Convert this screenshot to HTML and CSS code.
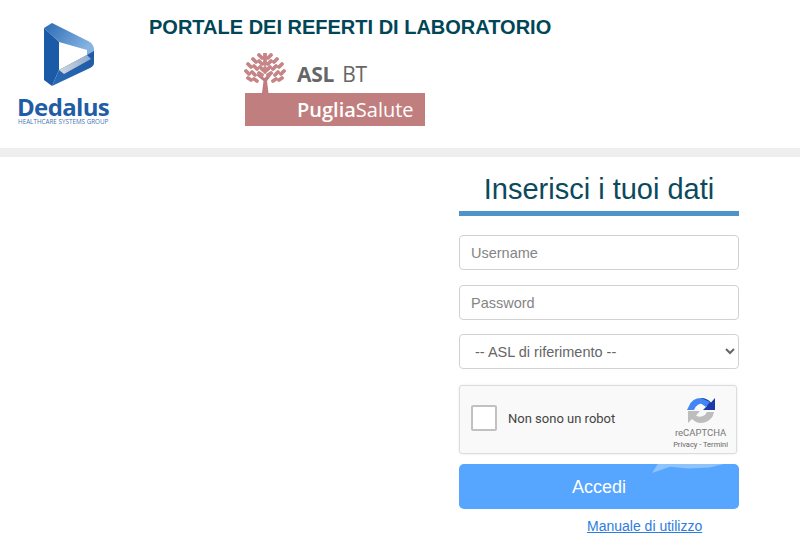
FILE: index.html
```html
<!DOCTYPE html>
<html lang="it">
<head>
<meta charset="utf-8">
<title>Portale dei referti di laboratorio</title>
<link rel="stylesheet" href="styles.css">
</head>
<body>
<header class="header">
  <div class="brand">
    <svg class="brand-mark" viewBox="0 0 52 64" width="52" height="64" aria-hidden="true">
      <defs>
        <linearGradient id="top" x1="0" y1="0" x2="1" y2="0.5">
          <stop offset="0" stop-color="#2a6ab4"/><stop offset="1" stop-color="#86b3e2"/>
        </linearGradient>
        <linearGradient id="low" x1="0" y1="1" x2="1" y2="0">
          <stop offset="0" stop-color="#2a6ab4"/><stop offset="1" stop-color="#1d5aa6"/>
        </linearGradient>
        <linearGradient id="inner" x1="0" y1="0" x2="1" y2="0">
          <stop offset="0" stop-color="#d3d8e0"/><stop offset="1" stop-color="#8fa9cc"/>
        </linearGradient>
      </defs>
      <path d="M0 5 L8 0 L46 19 Q50 22 50 27 L50 32 L43 32 L43 27 L15 19 Z" fill="url(#top)"/>
      <path d="M0 5 L15 19 L15 47 L8 63 L0 57 Z" fill="#1b5aa6"/>
      <path d="M15 47 L43 32 L50 28 L50 40 Q50 43 46 45 L8 63 Z" fill="url(#low)"/>
      <path d="M15 47 L43 32 L47 36 L20 51 Z" fill="url(#inner)"/>
    </svg>
    <div class="brand-name">Dedalus</div>
    <div class="brand-sub">HEALTHCARE SYSTEMS GROUP</div>
  </div>
  <div class="heading">
    <h1 class="portal-title">PORTALE DEI REFERTI DI LABORATORIO</h1>
    <div class="asl">
      <div class="asl-top">
        <svg class="tree" viewBox="0 0 42 40" width="42" height="40" aria-hidden="true">
          <path d="M18 40 L19.500 28 L12 22 L14 21 L20.500 25 L27 19 L29 20 L23 28 L24.500 40 Z" fill="#c07c7e"/>
          <g stroke="#c58587" stroke-width="3.800" stroke-linecap="round">
            <path d="M15 2l3 3M21 1l0 4M27 2l-3 3M9 6l3 3M15 8l3 3M21 7l0 4M27 8l-3 3M33 6l-3 3"/>
            <path d="M4 11l3 3M10 13l3 3M16 14l3 3M26 14l-3 3M32 13l-3 3M38 11l-3 3"/>
            <path d="M2 18l3 3M8 19l3 3M15 20l3 2M27 20l-3 2M34 19l-3 3M40 18l-3 3"/>
            <path d="M4 25l3 2M10 26l3 2M32 26l-3 2M38 25l-3 2M21 15l0 4"/>
          </g>
        </svg>
        <span class="asl-name"><b>ASL</b> BT</span>
      </div>
      <div class="asl-banner"><b>Puglia</b>Salute</div>
    </div>
  </div>
</header>
<div class="divider"></div>
<main class="main">
  <form class="login">
    <h2 class="login-title">Inserisci i tuoi dati</h2>
    <input class="field" type="text" placeholder="Username">
    <input class="field" type="password" placeholder="Password">
    <select class="field field-select">
      <option>-- ASL di riferimento --</option>
    </select>
    <div class="captcha">
      <span class="captcha-check"></span>
      <span class="captcha-label">Non sono un robot</span>
      <div class="captcha-brand">
        <svg class="captcha-icon" viewBox="0 0 28 28" width="28" height="28" aria-hidden="true">
          <path d="M14 1 A13 13 0 0 1 24 5.500 L28 1 L28 13 L16 13 L20 9 A8 8 0 0 0 14 6.500 Z" fill="#1c3aa9"/>
          <path d="M14 1 A13 13 0 0 0 2 9 L0 13 L7 13 L8.500 10 A8 8 0 0 1 14 6.500 L19 10 L23 5 Z" fill="#4285f4"/>
          <path d="M1 14 L1 26 L5 22 A13 13 0 0 0 27 15 L20 15 A7.500 7.500 0 0 1 9 18.500 L13 14 Z" fill="#bdbdbd"/>
        </svg>
        <span class="captcha-name">reCAPTCHA</span>
        <span class="captcha-links">Privacy - Termini</span>
      </div>
    </div>
    <button class="submit" type="button">Accedi</button>
    <div class="manual"><a class="manual-link" href="#">Manuale di utilizzo</a></div>
  </form>
</main>
</body>
</html>
```
FILE: styles.css
```css
* { box-sizing: border-box; }
html, body { margin: 0; height: 100%; overflow: hidden; }
body {
  background: #fff;
  font-family: "Liberation Sans", Arial, sans-serif;
  color: #555;
}
.header { display: flex; height: 148px; }
.brand {
  width: 149px;
  padding: 23px 0 0 17px;
  display: flex;
  flex-direction: column;
  align-items: flex-start;
}
.brand-mark { margin-left: 27px; flex: none; }
.brand-name {
  font-family: "Open Sans", sans-serif;
  font-weight: 700;
  font-size: 24px;
  line-height: 22px;
  letter-spacing: -0.65px;
  color: #1f5ea6;
  margin-top: 9px;
}
.brand-sub {
  font-family: "Open Sans", sans-serif;
  font-size: 6.3px;
  line-height: 7px;
  color: #3f76b4;
  white-space: nowrap;
  margin-left: 1px;
}
.heading { display: flex; flex-direction: column; }
.portal-title {
  margin: 16px 0 0;
  font-size: 20px;
  line-height: 22px;
  font-weight: 700;
  color: #004656;
  white-space: nowrap;
}
.asl { margin: 15px 0 0 96px; width: 180px; }
.asl-top { display: flex; align-items: flex-end; height: 40px; }
.tree { flex: none; margin-left: -1px; }
.asl-name {
  font-family: "Open Sans", sans-serif;
  font-size: 21px;
  line-height: 30px;
  color: #666;
  margin-left: 11px;
  margin-bottom: 4px;
  word-spacing: 3px;
  letter-spacing: -0.3px;
}
.asl-name b { font-weight: 700; }
.asl-banner {
  height: 33px;
  background: #c17e7e;
  color: #fff;
  font-family: "Open Sans", sans-serif;
  font-size: 20px;
  line-height: 33px;
  padding-left: 52px;
}
.asl-banner b { font-weight: 600; }
.divider { height: 9px; background: #eeeeee; }
.main { display: flex; justify-content: flex-end; padding-right: 61px; }
.login { width: 280px; display: flex; flex-direction: column; }
.login-title {
  margin: 0;
  height: 59px;
  padding-top: 15px;
  border-bottom: 5px solid #4f94c9;
  text-align: center;
  font-size: 29px;
  line-height: 34px;
  font-weight: 400;
  color: #0b4a5c;
}
.field {
  height: 35px;
  margin-top: 19px;
  padding: 0 11px;
  border: 1px solid #d2d2d2;
  border-radius: 4px;
  background: #fff;
  font-family: inherit;
  font-size: 14.5px;
  color: #666;
}
.field::placeholder { color: #858585; opacity: 1; }
.field + .field { margin-top: 15px; }
.field + .field-select { margin-top: 14px; padding-left: 11px; }
.captcha {
  margin-top: 16px;
  width: 278px;
  height: 69px;
  display: flex;
  align-items: center;
  padding: 0 8px 3px 11px;
  background: #f9f9f9;
  border: 1px solid #dcdcdc;
  border-radius: 3px;
  box-shadow: 0 0 3px rgba(0, 0, 0, 0.08);
}
.captcha-check {
  width: 26px;
  height: 26px;
  flex: none;
  background: #fff;
  border: 2px solid #c1c1c1;
  border-radius: 2px;
}
.captcha-label {
  font-family: Roboto, sans-serif;
  font-size: 13px;
  color: #444;
  margin-left: 11px;
  flex: 1;
}
.captcha-brand {
  display: flex;
  flex-direction: column;
  align-items: center;
  color: #777;
  font-family: Roboto, sans-serif;
  padding-top: 10px;
}
.captcha-icon { margin-bottom: 2px; }
.captcha-name { font-size: 9.5px; line-height: 12px; }
.captcha-links { font-size: 7.5px; line-height: 11px; color: #666; }
.submit {
  position: relative;
  margin-top: 10px;
  height: 45px;
  padding: 1px 0 0;
  border: 0;
  border-radius: 5px;
  background: #56a5ff;
  color: #fff;
  font-family: inherit;
  font-size: 18px;
  overflow: hidden;
}
.submit::after {
  content: "";
  position: absolute;
  top: 0;
  left: 193px;
  width: 72px;
  height: 9px;
  background: #8fc3fb;
  clip-path: polygon(8% 0, 100% 0, 80% 40%, 50% 50%, 25% 30%, 0 100%);
}
.manual { margin-top: 8px; padding-left: 128px; }
.manual-link { font-size: 14px; line-height: 17px; color: #2d7ce0; white-space: nowrap; }
```
